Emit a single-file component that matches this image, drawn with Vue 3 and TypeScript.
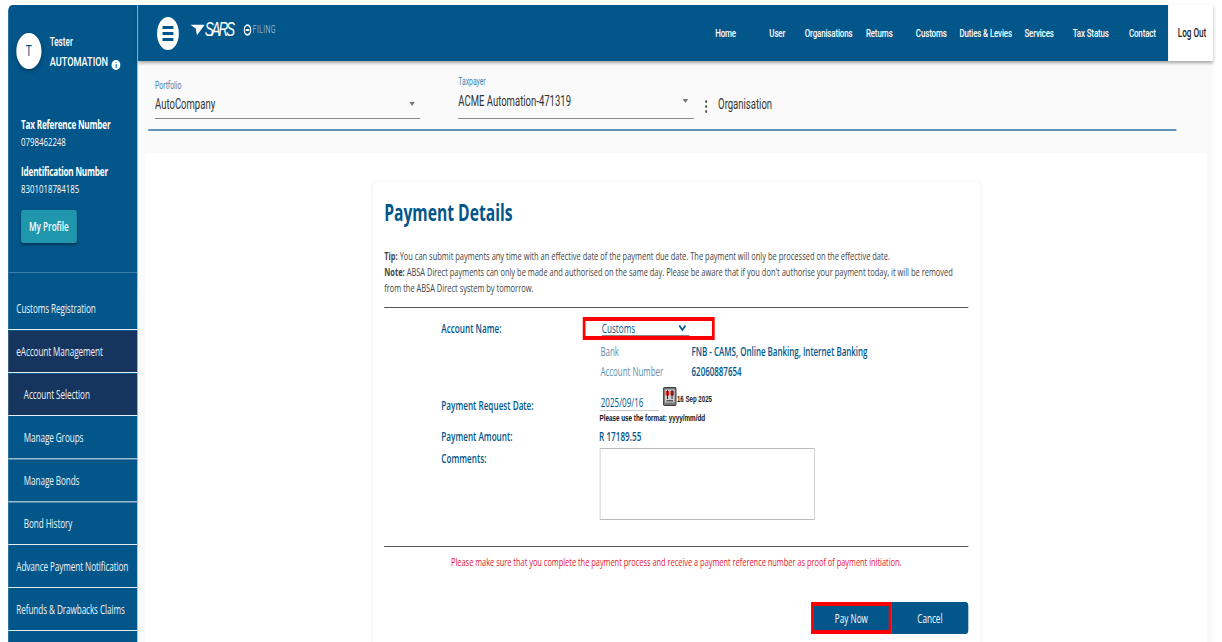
<script setup lang="ts">
const topLinks = ["Home", "User", "Organisations", "Returns", "Customs", "Duties & Levies", "Services", "Tax Status", "Contact"];

const sideLinks = [
  { label: "Customs Registration", sub: false, active: false, dim: false },
  { label: "eAccount Management", sub: false, active: true, dim: false },
  { label: "Account Selection", sub: true, active: true, dim: false },
  { label: "Manage Groups", sub: true, active: false, dim: true },
  { label: "Manage Bonds", sub: true, active: false, dim: true },
  { label: "Bond History", sub: true, active: false, dim: false },
  { label: "Advance Payment Notification", sub: false, active: false, dim: false },
  { label: "Refunds & Drawbacks Claims", sub: false, active: false, dim: false },
  { label: "", sub: false, active: false, dim: false },
];
</script>

<template>
  <div class="page">
    <aside class="sidebar">
      <div class="user">
        <div class="avatar">T</div>
        <div class="user-name">
          <div>Tester</div>
          <div class="surname">AUTOMATION <span class="info">i</span></div>
        </div>
      </div>
      <div class="ids">
        <div class="id-label">Tax Reference Number</div>
        <div class="id-value">0798462248</div>
        <div class="id-label second">Identification Number</div>
        <div class="id-value">8301018784185</div>
        <button class="profile-btn">My Profile</button>
      </div>
      <nav class="side-nav">
        <a
          v-for="link in sideLinks"
          :key="link.label"
          class="side-link"
          :class="{ sub: link.sub, active: link.active, dim: link.dim }"
        >{{ link.label }}</a>
      </nav>
    </aside>

    <div class="main">
      <div class="topbar">
        <header class="header">
          <button class="burger"><span></span><span></span><span></span></button>
          <div class="logo">
            <svg class="logo-mark" viewBox="0 0 24 16" width="21" height="12" preserveAspectRatio="none">
              <path d="M0 1 L24 1 L11 15 L9 6 Z" fill="#fff" />
            </svg>
            <span class="logo-sars">SARS</span>
            <svg class="efiling-mark" viewBox="0 0 16 16" width="12" height="12">
              <circle cx="8" cy="8" r="6.5" fill="none" stroke="#fff" stroke-width="2.4" />
              <path d="M4.5 8h7" stroke="#fff" stroke-width="2.4" />
            </svg>
            <span class="logo-filing">FILING</span>
          </div>
          <nav class="top-nav">
            <a v-for="item in topLinks" :key="item">{{ item }}</a>
          </nav>
        </header>
        <a class="logout">Log Out</a>
      </div>

      <div class="filters">
        <div class="field portfolio">
          <label>Portfolio</label>
          <div class="field-value">AutoCompany<i class="caret"></i></div>
        </div>
        <div class="field taxpayer">
          <label>Taxpayer</label>
          <div class="field-value">ACME Automation-471319<i class="caret"></i></div>
        </div>
        <div class="dots"><i></i><i></i><i></i></div>
        <div class="org">Organisation</div>
      </div>

      <section class="panel">
        <div class="card">
          <h1>Payment Details</h1>
          <div class="tips">
            <div><b>Tip:</b> You can submit payments any time with an effective date of the payment due date. The payment will only be processed on the effective date.</div>
            <div><b>Note:</b> ABSA Direct payments can only be made and authorised on the same day. Please be aware that if you don't authorise your payment today, it will be removed</div>
            <div>from the ABSA Direct system by tomorrow.</div>
          </div>
          <div class="form">
            <div class="row row-account">
              <div class="label">Account Name:</div>
              <div class="highlight">
                <div class="account-select">
                  <span>Customs</span>
                  <svg viewBox="0 0 12 8" width="13" height="8">
                    <path d="M1.5 1.5 L6 6 L10.5 1.5" fill="none" stroke="#00558a" stroke-width="2.2" />
                  </svg>
                </div>
              </div>
            </div>
            <div class="bank-row"><span class="muted">Bank</span><b>FNB - CAMS, Online Banking, Internet Banking</b></div>
            <div class="bank-row"><span class="muted">Account Number</span><b>62060887654</b></div>
            <div class="row row-date">
              <div class="label">Payment Request Date:</div>
              <div class="date-col">
                <div class="date-line">
                  <span class="date-input">2025/09/16</span>
                  <svg class="calendar" viewBox="0 0 20 19" width="20" height="19">
                    <rect x="0.5" y="0.5" width="19" height="18" rx="1.5" fill="#777" stroke="#222" />
                    <rect x="3" y="2.5" width="14" height="13" fill="#d0d0d0" />
                    <rect x="4" y="4" width="5" height="4.5" fill="#e01818" />
                    <rect x="11" y="4" width="5" height="4.5" fill="#e01818" />
                    <rect x="6" y="3" width="1.4" height="9" fill="#222" />
                    <rect x="12.6" y="3" width="1.4" height="9" fill="#222" />
                    <rect x="5" y="13" width="10" height="1.5" fill="#555" />
                  </svg>
                  <span class="date-today">16 Sep 2025</span>
                </div>
                <div class="date-hint">Please use the format: yyyy/mm/dd</div>
              </div>
            </div>
            <div class="row row-amount">
              <div class="label">Payment Amount:</div>
              <div class="amount">R 17189.55</div>
            </div>
            <div class="row row-comments">
              <div class="label">Comments:</div>
              <div class="comments"></div>
            </div>
          </div>
          <p class="warning">Please make sure that you complete the payment process and receive a payment reference number as proof of payment initiation.</p>
          <div class="actions">
            <button class="btn pay">Pay Now</button>
            <button class="btn cancel">Cancel</button>
          </div>
        </div>
      </section>
    </div>
  </div>
</template>

<style scoped>
/* the reference is a squeezed capture: everything inside .page is sized
   in unsqueezed px (1 px on screen across = 1.47 px here) */
.page {
  display: flex;
  width: 1797px;
  height: 642px;
  padding: 5px 13px 0 12px;
  box-sizing: border-box;
  background: #fff;
  overflow: hidden;
  transform: scaleX(0.68);
  transform-origin: 0 0;
  font-family: "Open Sans", sans-serif;
  color: #333;
}

.sidebar {
  flex: none;
  width: 190px;
  height: 637px;
  overflow: hidden;
  background: #02568a;
  border-top-left-radius: 6px;
  color: #fff;
}
.user {
  display: flex;
  align-items: center;
  gap: 12px;
  padding: 26px 0 0 12px;
}
.avatar {
  display: flex;
  align-items: center;
  justify-content: center;
  width: 37px;
  height: 36px;
  border-radius: 50%;
  background: #fff;
  color: #02568a;
  font: 15px Roboto, sans-serif;
  box-shadow: 0 2px 5px rgba(0, 0, 0, 0.3);
}
.user-name {
  font: 500 12px/18px Roboto, sans-serif;
  margin-top: 2px;
}
.surname {
  font-size: 13.5px;
  margin-top: 1px;
}
.info {
  display: inline-block;
  width: 13px;
  height: 10px;
  border-radius: 50%;
  background: #fff;
  color: #02568a;
  font: 700 9px/10px "Liberation Serif", serif;
  text-align: center;
  margin-left: 2px;
  vertical-align: -2px;
}
.ids {
  padding: 46px 0 0 19px;
  height: 184px;
  box-sizing: border-box;
}
.id-label {
  font-size: 12px;
  line-height: 17px;
  font-weight: 700;
  letter-spacing: -0.3px;
}
.id-label.second {
  margin-top: 13px;
}
.id-value {
  font-size: 11.5px;
  line-height: 17px;
}
.profile-btn {
  display: block;
  width: 82px;
  height: 33px;
  margin-top: 13px;
  padding: 0;
  border: none;
  border-radius: 3px;
  background: #2096ad;
  color: #fff;
  font: 600 12px "Open Sans", sans-serif;
  box-shadow: 0 2px 3px rgba(0, 0, 0, 0.35);
}
.side-nav {
  margin-top: 18px;
  padding-top: 15px;
  border-top: 1px solid #3d7ea8;
}
.side-link {
  display: flex;
  align-items: center;
  height: 41px;
  padding-left: 12px;
  margin-bottom: 1.96px;
  box-shadow: 0 1px 0 #e3edf3;
  font-size: 12px;
  letter-spacing: -0.12px;
  color: #f0f5f8;
}
.side-link.sub {
  padding-left: 23px;
}
.side-link.active {
  background: #15345e;
}
.side-link.dim {
  box-shadow: 0 1.5px 0 #9fbccf;
}

.main {
  flex: 1;
  min-width: 0;
  margin-left: 1px;
  background: #fafafa;
}
.topbar {
  display: flex;
  height: 56px;
  box-shadow: 0 2px 4px rgba(0, 0, 0, 0.35);
  position: relative;
}
.header {
  display: flex;
  align-items: center;
  width: 1515px;
  padding-left: 28px;
  box-sizing: border-box;
  background: #02568a;
}
.burger {
  display: flex;
  flex-direction: column;
  justify-content: center;
  gap: 3px;
  width: 32px;
  height: 33px;
  padding: 0 8px;
  border: none;
  border-radius: 50%;
  background: #fff;
}
.burger span {
  height: 3px;
  background: #02568a;
}
.logo {
  display: flex;
  align-items: center;
  margin: -7px 0 0 17px;
  color: #fff;
}
.logo-sars {
  font: italic 400 20px "Liberation Sans", sans-serif;
  letter-spacing: -3.2px;
}
.efiling-mark {
  margin-left: 15px;
}
.logo-filing {
  font: 300 10px Roboto, sans-serif;
  color: #c9d9e4;
  margin-left: 2px;
  letter-spacing: 0.6px;
}
.top-nav {
  display: grid;
  grid-template-columns: 76px 76px 75px 74px 79px 81px 76px 76px 76px;
  margin-left: auto;
  color: #fff;
  font: 500 11.7px Roboto, sans-serif;
  letter-spacing: -0.2px;
  text-align: center;
  white-space: nowrap;
}
.logout {
  flex: 1;
  display: flex;
  align-items: center;
  padding-left: 14px;
  background: #fff;
  font: 500 12px Roboto, sans-serif;
  color: #222;
}

.filters {
  display: flex;
  height: 68px;
  width: 1502px;
  margin-left: 15px;
  padding-left: 10px;
  border-bottom: 2px solid #5c95b8;
  font-family: Roboto, sans-serif;
}
.field {
  position: relative;
  box-sizing: border-box;
  height: 58px;
}
.portfolio {
  width: 390px;
  padding-top: 19px;
}
.taxpayer {
  width: 346px;
  margin-left: 56px;
  padding-top: 15px;
}
.field label {
  display: block;
  font-size: 10px;
  line-height: 12px;
  color: #3f86ad;
}
.field-value {
  display: flex;
  align-items: center;
  justify-content: space-between;
  height: 22px;
  margin-top: 1px;
  padding-right: 8px;
  font-size: 14px;
  color: #333;
}
.taxpayer .field-value {
  margin-top: 2px;
}
.field::after {
  content: "";
  position: absolute;
  left: 0;
  right: 0;
  bottom: 0;
  height: 1px;
  background: #888;
}
.caret {
  width: 0;
  height: 0;
  border-left: 4px solid transparent;
  border-right: 4px solid transparent;
  border-top: 4px solid #777;
}
.dots {
  display: flex;
  flex-direction: column;
  gap: 2px;
  margin: 39px 0 0 17px;
}
.dots i {
  width: 3px;
  height: 3px;
  border-radius: 50%;
  background: #555;
}
.org {
  margin: 35px 0 0 16px;
  font-size: 14px;
}

.panel {
  margin: 22px 9px 0 11px;
  padding-top: 29px;
  height: 489px;
  box-sizing: border-box;
  background: #fff;
}
.card {
  width: 894px;
  height: 480px;
  margin-left: 334px;
  padding: 0 18px 0 17px;
  box-sizing: border-box;
  border-radius: 6px;
  background: #fff;
  box-shadow: 0 0 4px rgba(0, 0, 0, 0.08);
}
h1 {
  margin: 0;
  padding-top: 14px;
  font-size: 23px;
  line-height: 32px;
  font-weight: 700;
  color: #02568a;
}
.tips {
  margin: 20px 0 0;
  padding-bottom: 11px;
  border-bottom: 1px solid #555;
  font-size: 11px;
  line-height: 16px;
  color: #444;
}
.tips b {
  font-weight: 700;
}
.form {
  height: 239px;
  box-sizing: border-box;
  padding-left: 84px;
  border-bottom: 1px solid #555;
}
.row {
  display: flex;
}
.label {
  width: 231px;
  flex: none;
  font-size: 12px;
  font-weight: 600;
  color: #02568a;
}
.row-account {
  align-items: center;
  padding-top: 8px;
  height: 25px;
}
.highlight {
  flex: none;
  width: 194px;
  height: 23px;
  box-sizing: border-box;
  margin-left: -23px;
  padding-left: 24px;
  border: 4px solid #f00;
}
.account-select {
  display: flex;
  align-items: center;
  justify-content: space-between;
  width: 129px;
  height: 15px;
  padding: 0 4px 0 0;
  box-sizing: border-box;
  border-bottom: 1px solid #888;
  font-size: 12px;
  color: #02568a;
}
.bank-row {
  display: flex;
  height: 20px;
  align-items: center;
  margin-left: 234px;
  font-size: 11.7px;
}
.bank-row .muted {
  width: 134px;
  color: #5c8fae;
}
.bank-row b {
  font-weight: 600;
  color: #02568a;
}
.row-date {
  height: 39px;
  padding-top: 6px;
}
.row-date .label {
  padding-top: 10px;
}
.date-col {
  margin-left: 1.5px;
}
.date-line {
  display: flex;
  align-items: flex-start;
  height: 24px;
}
.date-input {
  width: 87px;
  height: 24px;
  margin-right: 6px;
  padding: 7px 0 0 2px;
  box-sizing: border-box;
  border-bottom: 1px solid #ccc;
  font-size: 11.8px;
  color: #02568a;
}
.calendar {
  flex: none;
}
.date-today {
  margin-left: 1px;
  padding-top: 7px;
  font: 700 9px "Liberation Sans", sans-serif;
  white-space: nowrap;
  color: #222;
}
.date-hint {
  margin-top: 2px;
  font: 700 9.3px "Liberation Sans", sans-serif;
  white-space: nowrap;
  color: #111;
}
.row-amount {
  height: 20px;
  align-items: center;
}
.amount {
  font-size: 12px;
  font-weight: 600;
  margin-left: 1px;
  color: #02568a;
}
.row-comments {
  margin-top: 2px;
}
.row-comments .label {
  padding-top: 2px;
}
.comments {
  width: 316px;
  height: 72px;
  margin-left: 1.5px;
  box-sizing: border-box;
  border: 1px solid #bbb;
}
.warning {
  margin: 7px 0 0;
  font-size: 10.9px;
  line-height: 16px;
  text-align: center;
  color: #e8112d;
}
.actions {
  display: flex;
  justify-content: flex-end;
  margin-top: 32px;
}
.btn {
  height: 32px;
  padding: 0;
  border: none;
  background: #02568a;
  color: #fff;
  font: 500 12px "Open Sans", sans-serif;
}
.pay {
  width: 118px;
  box-sizing: border-box;
  border: 4px solid #f00;
}
.cancel {
  width: 113px;
  border-radius: 0 4px 4px 0;
}
</style>

<style>
html,
body {
  overflow: hidden;
  background: #fff;
}
</style>
